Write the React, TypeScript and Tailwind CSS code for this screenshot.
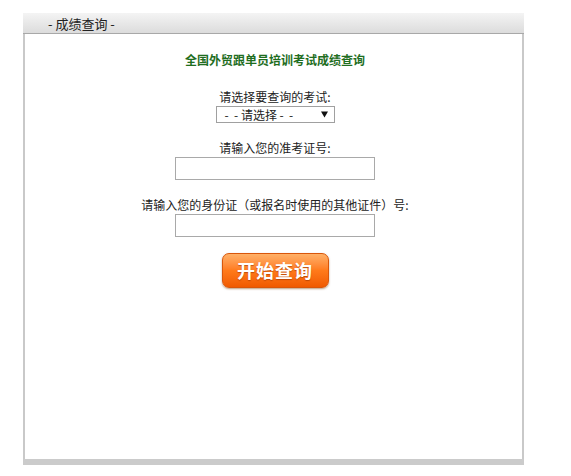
export default function App() {
  return (
    <div
      className="min-h-screen bg-white pt-[13px] pl-[23px]"
      style={{ fontFamily: '"Noto Sans CJK SC", "Noto Sans", sans-serif' }}
    >
      <div className="w-[501px]">
        {/* header */}
        <div className="flex h-[21px] items-center border-b border-[#a8a8a8] bg-gradient-to-b from-[#f4f4f4] to-[#dcdcdc] pl-[25px] text-[13px] leading-none text-[#222]">
          - 成绩查询 -
        </div>

        {/* body */}
        <div className="flex h-[425px] flex-col items-center border-x-2 border-[#c9c9c9] bg-white pl-[3px] text-[12px] text-[#222]">
          <div className="mt-[18px] text-[12px] font-bold leading-[16px] text-[#1f6e1f]">
            全国外贸跟单员培训考试成绩查询
          </div>

          <div className="mt-[21px] leading-[16px]">请选择要查询的考试:</div>
          <div className="mt-[1px] flex h-[17px] w-[119px] items-center justify-between border border-[#a0a0a0] bg-white pl-[8px] pr-[6px] leading-none">
            <span className="whitespace-pre">-  - 请选择 -  -</span>
            <svg width="7" height="7" viewBox="0 0 7 7">
              <path d="M0 0.5 H7 L3.5 6.5 Z" fill="#111" />
            </svg>
          </div>

          <div className="mt-[17px] leading-[16px]">请输入您的准考证号:</div>
          <input
            type="text"
            className="mt-[1px] h-[23px] w-[200px] border border-[#a9a9a9] bg-white outline-none"
          />

          <div className="mt-[17px] leading-[16px]">
            请输入您的身份证（或报名时使用的其他证件）号:
          </div>
          <input
            type="text"
            className="mt-[1px] h-[23px] w-[200px] border border-[#a9a9a9] bg-white outline-none"
          />

          <button className="mt-[16px] flex h-[35px] w-[107px] items-center justify-center rounded-[7px] border border-[#d9560a] bg-gradient-to-b from-[#ffb066] via-[#ff7a1a] to-[#f05a00] text-[18px] font-bold tracking-[1px] text-white shadow-[0_1px_2px_rgba(120,60,0,0.5)] [text-shadow:0_1px_1px_rgba(150,50,0,0.6)]">
            开始查询
          </button>
        </div>

        {/* bottom bar */}
        <div className="h-[6px] bg-[#cbcbcb]" />
      </div>
    </div>
  );
}
